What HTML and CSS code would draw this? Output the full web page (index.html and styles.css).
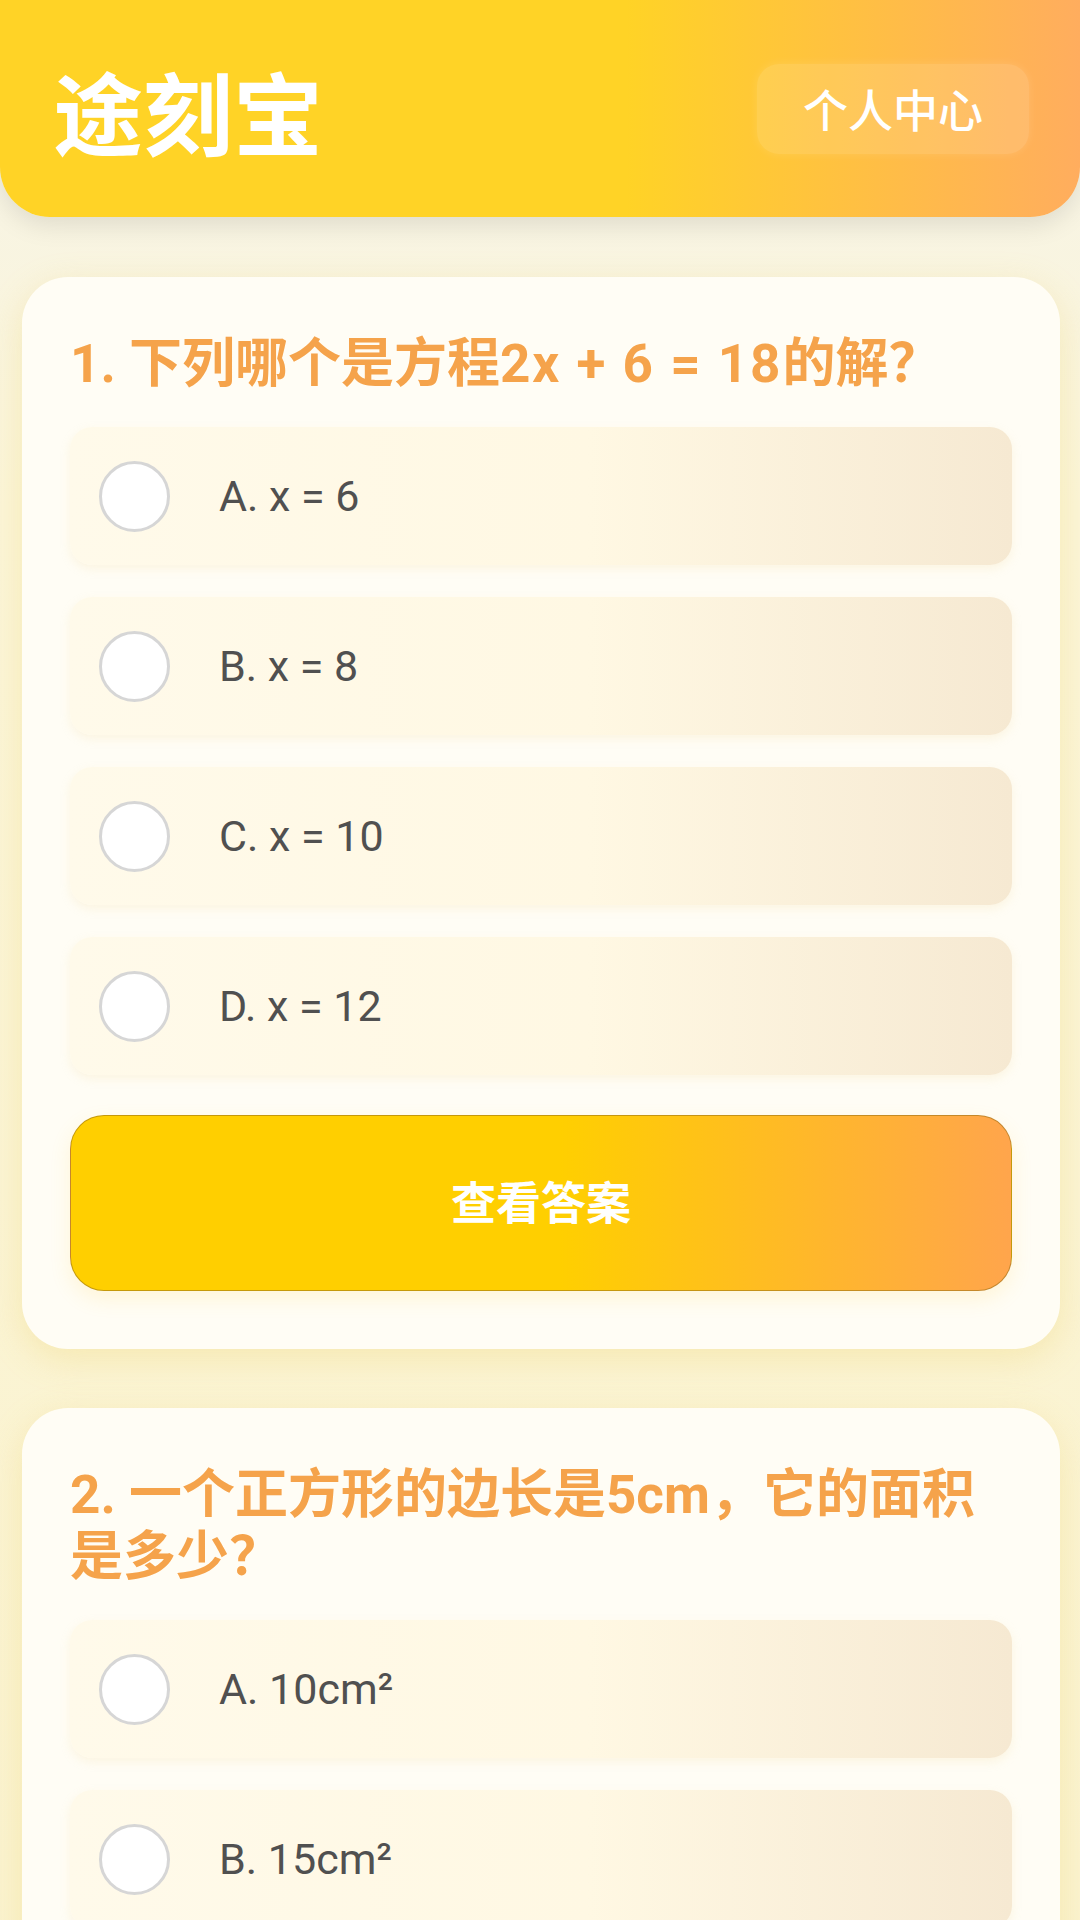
FILE: index.html
```html
<!DOCTYPE html>
<html lang="zh-CN">
<head>
  <meta charset="UTF-8" />
  <meta name="viewport" content="width=device-width, initial-scale=1.0" />
  <title>途刻宝</title>
  <link rel="stylesheet" href="styles.css">
</head>
<body>
  <div class="header">
    <div class="logo">途刻宝</div>
    <button class="user-button">个人中心</button>
  </div>

  <div class="quiz-list">
    <div class="quiz-card">
      <div class="question">1. 下列哪个是方程<span class="formula">2x + 6 = 18</span>的解？</div>
      <div class="options">
        <div class="option"><span class="radio"></span><span class="option-text">A. x = 6</span></div>
        <div class="option"><span class="radio"></span><span class="option-text">B. x = 8</span></div>
        <div class="option"><span class="radio"></span><span class="option-text">C. x = 10</span></div>
        <div class="option"><span class="radio"></span><span class="option-text">D. x = 12</span></div>
      </div>
      <button class="answer-button">查看答案</button>
    </div>

    <div class="quiz-card">
      <div class="question">2. 一个正方形的边长是5cm，它的面积是多少？</div>
      <div class="options">
        <div class="option"><span class="radio"></span><span class="option-text">A. 10cm²</span></div>
        <div class="option"><span class="radio"></span><span class="option-text">B. 15cm²</span></div>
        <div class="option"><span class="radio"></span><span class="option-text">C. 20cm²</span></div>
        <div class="option"><span class="radio"></span><span class="option-text">D. 25cm²</span></div>
      </div>
      <button class="answer-button">查看答案</button>
    </div>
  </div>
</body>
</html>
```

FILE: styles.css
```css
html, body {
  margin: 0;
  background: linear-gradient(180deg, #f6f4ea 0%, #fbf5d8 20%, #faf2cc 100%);
  font-family: Roboto, "Noto Sans CJK SC", sans-serif;
  overflow: hidden;
}

.header {
  height: 217px;
  box-sizing: border-box;
  padding: 0 51px 0 53px;
  display: flex;
  justify-content: space-between;
  align-items: center;
  background: linear-gradient(90deg, #ffd326 0%, #ffd326 58%, #ffad5e 100%);
  border-radius: 0 0 50px 50px;
  box-shadow: 0 8px 26px rgba(0, 0, 0, 0.1);
}

.logo {
  font-family: "Noto Sans CJK SC", sans-serif;
  font-size: 90px;
  font-weight: 700;
  color: white;
  margin-top: 2px;
}

.user-button {
  font-family: "Noto Sans CJK SC", sans-serif;
  font-size: 45px;
  font-weight: 500;
  color: white;
  background-color: rgba(255, 255, 255, 0.13);
  border: none;
  border-radius: 22px;
  width: 272px;
  height: 90px;
  padding: 0;
  box-shadow: 0 0 10px rgba(255, 255, 255, 0.12);
}

.quiz-list {
  padding: 60px 20px 0 22px;
  display: flex;
  flex-direction: column;
  gap: 59px;
}

.quiz-card {
  background-color: #fffdf5;
  border-radius: 46px;
  padding: 56px 48px 58px 48px;
  box-shadow: 0 10px 34px rgba(238, 205, 90, 0.28);
}

.question {
  font-size: 53px;
  font-weight: 700;
  line-height: 62px;
  color: #f5a34b;
  margin-bottom: 32px;
}

.formula {
  letter-spacing: 2px;
}

.options {
  display: flex;
  flex-direction: column;
  gap: 32px;
}

.option {
  height: 138px;
  display: flex;
  align-items: center;
  padding-left: 29px;
  border-radius: 22px;
  background: linear-gradient(90deg, #fffaea 0%, #fff8e3 55%, #f6e9d2 100%);
  box-shadow: 0 4px 10px rgba(245, 225, 170, 0.25);
}

.radio {
  width: 71px;
  height: 71px;
  box-sizing: border-box;
  border: 3px solid #d6d6d6;
  border-radius: 50%;
  background-color: white;
  flex-shrink: 0;
}

.option-text {
  margin-left: 49px;
  font-size: 43px;
  color: #505050;
}

.answer-button {
  display: block;
  width: 100%;
  height: 176px;
  margin-top: 40px;
  border: 1px solid rgba(150, 110, 20, 0.55);
  border-radius: 34px;
  background: linear-gradient(90deg, #ffcf00 0%, #ffcf00 52%, #ffa54c 100%);
  font-family: "Noto Sans CJK SC", sans-serif;
  font-size: 45px;
  font-weight: 700;
  color: white;
  padding-bottom: 6px;
  box-shadow: 0 8px 20px rgba(255, 200, 60, 0.15);
}
```
